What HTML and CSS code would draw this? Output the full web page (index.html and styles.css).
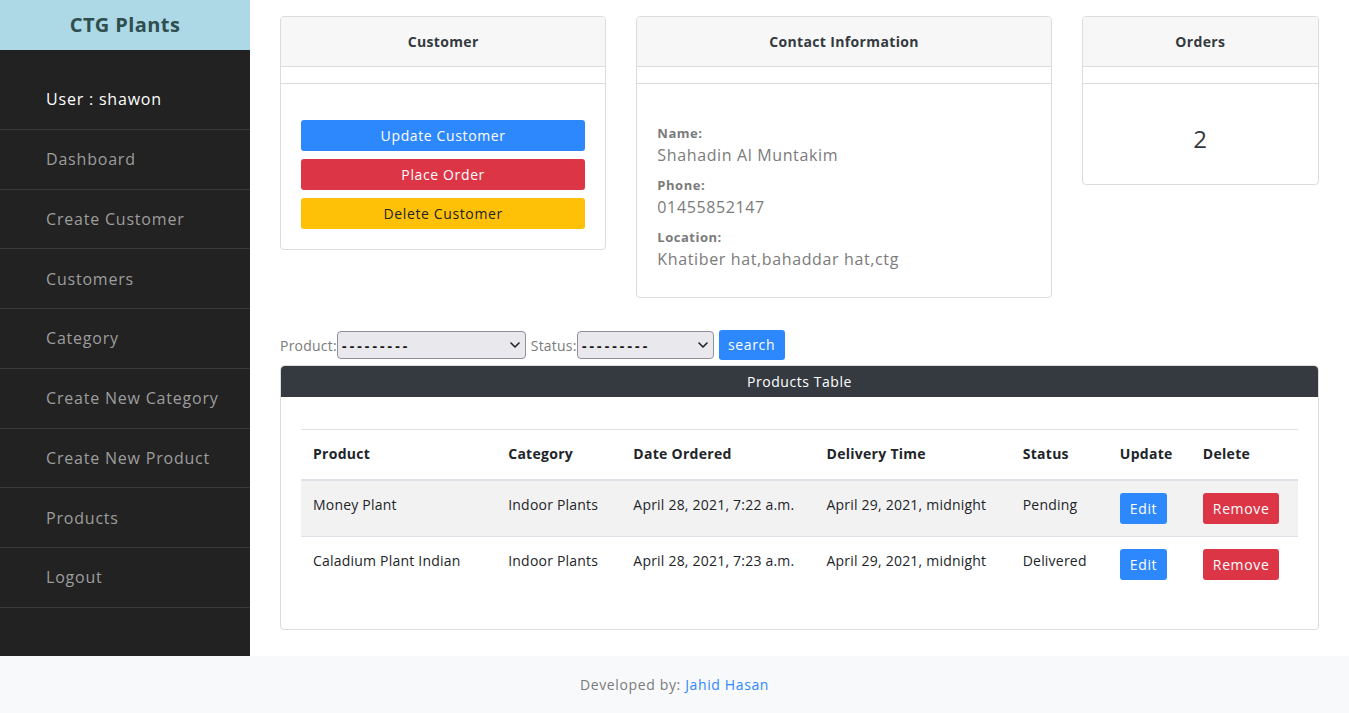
FILE: index.html
```html
<!DOCTYPE html>
<html lang="en">
<head>
<meta charset="utf-8">
<title>CTG Plants</title>
<link rel="stylesheet" href="styles.css">
</head>
<body>
<div class="layout">
  <aside class="sidebar">
    <div class="brand">CTG Plants</div>
    <ul class="nav">
      <li class="nav-item user">User : shawon</li>
      <li class="nav-item"><a href="#">Dashboard</a></li>
      <li class="nav-item"><a href="#">Create Customer</a></li>
      <li class="nav-item"><a href="#">Customers</a></li>
      <li class="nav-item"><a href="#">Category</a></li>
      <li class="nav-item"><a href="#">Create New Category</a></li>
      <li class="nav-item"><a href="#">Create New Product</a></li>
      <li class="nav-item"><a href="#">Products</a></li>
      <li class="nav-item"><a href="#">Logout</a></li>
    </ul>
  </aside>
  <main class="main">
    <div class="row">
      <div class="col col-4">
        <div class="card">
          <div class="card-header">Customer</div>
          <div class="card-gap"></div>
          <div class="card-body actions">
            <a class="btn btn-block btn-primary" href="#">Update Customer</a>
            <a class="btn btn-block btn-danger" href="#">Place Order</a>
            <a class="btn btn-block btn-warning" href="#">Delete Customer</a>
          </div>
        </div>
      </div>
      <div class="col col-5">
        <div class="card">
          <div class="card-header">Contact Information</div>
          <div class="card-gap"></div>
          <div class="card-body contact">
            <div class="field">
              <div class="field-label">Name:</div>
              <div class="field-value">Shahadin Al Muntakim</div>
            </div>
            <div class="field">
              <div class="field-label">Phone:</div>
              <div class="field-value">01455852147</div>
            </div>
            <div class="field">
              <div class="field-label">Location:</div>
              <div class="field-value">Khatiber hat,bahaddar hat,ctg</div>
            </div>
          </div>
        </div>
      </div>
      <div class="col col-3">
        <div class="card">
          <div class="card-header">Orders</div>
          <div class="card-gap"></div>
          <div class="card-body count">2</div>
        </div>
      </div>
    </div>

    <form class="filter">
      <label class="filter-label" for="product">Product:</label>
      <span class="select-wrap product-select">
        <select id="product" class="select"><option>---------</option></select>
        <svg class="chev" width="10" height="6" viewBox="0 0 10 6"><path d="M1 1l4 4 4-4" fill="none" stroke="#222" stroke-width="1.6" stroke-linecap="round" stroke-linejoin="round"/></svg>
      </span>
      <label class="filter-label status-label" for="status">Status:</label>
      <span class="select-wrap status-select">
        <select id="status" class="select"><option>---------</option></select>
        <svg class="chev" width="10" height="6" viewBox="0 0 10 6"><path d="M1 1l4 4 4-4" fill="none" stroke="#222" stroke-width="1.6" stroke-linecap="round" stroke-linejoin="round"/></svg>
      </span>
      <button class="btn btn-primary btn-search" type="button">search</button>
    </form>

    <div class="card table-card">
      <div class="card-header dark">Products Table</div>
      <div class="card-body table-body">
        <table class="table">
          <colgroup>
            <col class="c-product"><col class="c-category"><col class="c-date"><col class="c-delivery"><col class="c-status"><col class="c-update"><col class="c-delete">
          </colgroup>
          <thead>
            <tr>
              <th>Product</th><th>Category</th><th>Date Ordered</th><th>Delivery Time</th><th>Status</th><th>Update</th><th>Delete</th>
            </tr>
          </thead>
          <tbody>
            <tr class="striped">
              <td>Money Plant</td><td>Indoor Plants</td><td>April 28, 2021, 7:22 a.m.</td><td>April 29, 2021, midnight</td><td>Pending</td>
              <td><a class="btn btn-sm btn-primary" href="#">Edit</a></td>
              <td><a class="btn btn-sm btn-danger" href="#">Remove</a></td>
            </tr>
            <tr>
              <td>Caladium Plant Indian</td><td>Indoor Plants</td><td>April 28, 2021, 7:23 a.m.</td><td>April 29, 2021, midnight</td><td>Delivered</td>
              <td><a class="btn btn-sm btn-primary" href="#">Edit</a></td>
              <td><a class="btn btn-sm btn-danger" href="#">Remove</a></td>
            </tr>
          </tbody>
        </table>
      </div>
    </div>
  </main>
</div>
<footer class="footer">
  <span class="footer-text">Developed by: <a class="footer-link" href="#">Jahid Hasan</a></span>
</footer>
</body>
</html>
```

FILE: styles.css
```css
* { box-sizing: border-box; }

html, body {
  margin: 0;
  padding: 0;
}

body {
  font-family: "Open Sans", "Noto Sans", "Liberation Sans", sans-serif;
  color: #212529;
  background: #fff;
  font-size: 14px;
  line-height: 1.5;
  letter-spacing: 0.045em;
}

a { text-decoration: none; }

.layout {
  display: flex;
  align-items: stretch;
}

/* Sidebar */
.sidebar {
  width: 250px;
  flex: 0 0 250px;
  background: #222222;
}

.brand {
  height: 50px;
  background: #add8e6;
  color: #2f4f4f;
  font-weight: 700;
  font-size: 20px;
  letter-spacing: 0.02em;
  display: flex;
  align-items: center;
  justify-content: center;
}

.nav {
  list-style: none;
  margin: 0;
  padding: 20px 0 0 0;
}

.nav-item {
  height: 59.75px;
  border-bottom: 1px solid #3b3b3b;
  display: flex;
  align-items: center;
  padding-left: 46px;
  font-size: 16px;
  letter-spacing: 0.05em;
}

.nav-item a {
  color: #9d9d9d;
}

.nav-item.user {
  color: #ffffff;
}

/* Main */
.main {
  flex: 1 1 auto;
  padding: 16px 30px 26px 30px;
  min-width: 0;
}

.row {
  display: flex;
  align-items: flex-start;
  margin: 0 -15px;
}

.col {
  padding: 0 15px;
}

.col-4 { flex: 0 0 33.3333%; }
.col-5 { flex: 0 0 41.6667%; }
.col-3 { flex: 0 0 25%; }

.card {
  border: 1px solid #dcdcdc;
  border-radius: 4px;
  background: #fff;
  overflow: hidden;
}

.card-header {
  background: #f7f7f7;
  border-bottom: 1px solid #dcdcdc;
  padding: 13px 20px;
  line-height: 23px;
  font-size: 14px;
  font-weight: 700;
  letter-spacing: 0.025em;
  color: #343a40;
  text-align: center;
}

.card-gap {
  height: 17px;
  border-bottom: 1px solid #dcdcdc;
}

.card-body {
  padding: 20px;
}

.actions {
  padding-top: 36px;
}

.btn {
  display: inline-flex;
  align-items: center;
  justify-content: center;
  border: 0;
  border-radius: 3px;
  font-family: inherit;
  font-size: 14px;
  letter-spacing: 0.045em;
  cursor: pointer;
  line-height: 1;
}

.btn-block {
  display: flex;
  width: 100%;
  height: 31px;
  margin-bottom: 8px;
}

.btn-block:last-child { margin-bottom: 0; }

.btn-primary { background: #2e88fd; color: #fff; }
.btn-danger { background: #dc3545; color: #fff; }
.btn-warning { background: #ffc107; color: #212529; }

.contact {
  padding-top: 39px;
  padding-bottom: 26px;
}

.field + .field { margin-top: 8px; }

.field-label {
  font-size: 13px;
  font-weight: 700;
  color: #7b7b7b;
  line-height: 20px;
  letter-spacing: 0.04em;
}

.field-value {
  font-size: 16px;
  color: #7b7b7b;
  line-height: 24px;
}

.count {
  text-align: center;
  font-size: 24px;
  line-height: 29px;
  color: #343a40;
  padding: 40px 20px 31px;
}

/* Filter */
.filter {
  margin-top: 32px;
  display: flex;
  align-items: center;
  height: 30px;
}

.filter-label {
  font-size: 14px;
  color: #7b7b7b;
  letter-spacing: 0.015em;
}

.status-label { margin-left: 5px; }

.select-wrap {
  position: relative;
  display: inline-block;
  height: 28px;
}

.product-select { width: 189px; }
.status-select { width: 137px; }

.select {
  appearance: none;
  -webkit-appearance: none;
  width: 100%;
  height: 28px;
  background: #e9e9ed;
  border: 1px solid #8f8f9d;
  border-radius: 4px;
  padding: 0 20px 0 4px;
  font-family: "Liberation Sans", sans-serif;
  font-size: 15px;
  font-weight: 700;
  letter-spacing: 2.6px;
  color: #1a1a1a;
}

.chev {
  position: absolute;
  right: 6px;
  top: 11px;
  pointer-events: none;
}

.btn-search {
  margin-left: 5px;
  height: 30px;
  width: 66px;
  font-size: 14px;
  border-radius: 3px;
}

/* Products table */
.table-card {
  margin-top: 5px;
}

.card-header.dark {
  background: #343a40;
  color: #fff;
  font-weight: 400;
  letter-spacing: 0.04em;
  padding: 4px 20px;
  line-height: 23px;
  border-bottom: 0;
  border-radius: 4px 4px 0 0;
}

.table-body {
  padding: 32px 20px 20px;
}

.table {
  width: 100%;
  table-layout: fixed;
  border-collapse: collapse;
  margin-bottom: 17px;
  font-size: 14px;
}

.c-product { width: 195px; }
.c-category { width: 125px; }
.c-date { width: 193px; }
.c-delivery { width: 196px; }
.c-status { width: 97px; }
.c-update { width: 83px; }
.c-delete { width: 107px; }

.table th,
.table td {
  padding: 12px;
  border-top: 1px solid #dee2e6;
  text-align: left;
  vertical-align: top;
  line-height: 24px;
  white-space: nowrap;
  letter-spacing: 0.015em;
}

.table th {
  font-weight: 700;
  letter-spacing: 0.02em;
  border-bottom: 2px solid #dee2e6;
  padding-bottom: 13px;
}

.striped td { background: #f2f2f2; }

.btn-sm {
  height: 31px;
  padding: 0 10px;
  font-size: 14px;
}

/* Footer */
.footer {
  height: 57px;
  background: #f8f9fa;
  display: flex;
  align-items: center;
  justify-content: center;
}

.footer-text {
  font-size: 14px;
  color: #7b7b7b;
}

.footer-link {
  color: #2e88fd;
}
```
